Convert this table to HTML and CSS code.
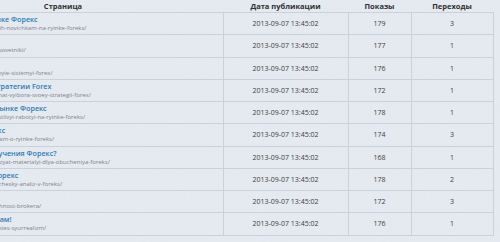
FILE: index.html
```html
<!DOCTYPE html>
<html lang="ru">
<head>
<meta charset="utf-8">
<title>Статистика страниц</title>
<link rel="stylesheet" href="styles.css">
</head>
<body>
<div class="wrap">
<table class="stats">
  <colgroup>
    <col class="c-page"><col class="c-date"><col class="c-views"><col class="c-clicks">
  </colgroup>
  <thead>
    <tr><th>Страница</th><th>Дата публикации</th><th>Показы</th><th>Переходы</th></tr>
  </thead>
  <tbody>
    <tr><td class="page"><a class="title" href="#">Советы новичкам на рынке Форекс</a><span class="url">http://forex-blog.ru/nachinayushih-novichkam-na-ryinke-foreks/</span></td><td>2013-09-07 13:45:02</td><td>179</td><td>3</td></tr>
    <tr><td class="page"><a class="title" href="#">Советники</a><span class="url">http://forex-blog.ru/fx-ekspertyi-sovetniki/</span></td><td>2013-09-07 13:45:02</td><td>177</td><td>1</td></tr>
    <tr><td class="page"><a class="title" href="#">Торговые системы</a><span class="url">http://forex-blog.ru/vyibor-torgovyie-sistemyi-forex/</span></td><td>2013-09-07 13:45:02</td><td>176</td><td>1</td></tr>
    <tr><td class="page"><a class="title" href="#">Секреты выбора своей стратегии Forex</a><span class="url">http://forex-blog.ru/glavnyiy-format-vyibora-svoey-strategii-forex/</span></td><td>2013-09-07 13:45:02</td><td>172</td><td>1</td></tr>
    <tr><td class="page"><a class="title" href="#">Секреты для работы на рынке Форекс</a><span class="url">http://forex-blog.ru/sovetyi-schastlivyi-rabotyi-na-ryinke-foreks/</span></td><td>2013-09-07 13:45:02</td><td>178</td><td>1</td></tr>
    <tr><td class="page"><a class="title" href="#">Новичкам о рынке Форекс</a><span class="url">http://forex-blog.ru/dlya-novichkam-o-ryinke-foreks/</span></td><td>2013-09-07 13:45:02</td><td>174</td><td>3</td></tr>
    <tr><td class="page"><a class="title" href="#">Какие материалы для обучения Форекс?</a><span class="url">http://forex-blog.ru/gde-mogut-vzyat-materialyi-dlya-obucheniya-foreks/</span></td><td>2013-09-07 13:45:02</td><td>168</td><td>1</td></tr>
    <tr><td class="page"><a class="title" href="#">Технический анализ в Форекс</a><span class="url">http://forex-blog.ru/vvod-v-tehnichesky-analiz-v-foreks/</span></td><td>2013-09-07 13:45:02</td><td>178</td><td>2</td></tr>
    <tr><td class="page"><a class="title" href="#">Надежность брокера</a><span class="url">http://forex-blog.ru/analiz-nadezhnost-brokera/</span></td><td>2013-09-07 13:45:02</td><td>172</td><td>3</td></tr>
    <tr><td class="page"><a class="title" href="#">Желаем успехов трейдерам!</a><span class="url">http://forex-blog.ru/kartinyi-puantes-syurrealizm/</span></td><td>2013-09-07 13:45:02</td><td>176</td><td>1</td></tr>
  </tbody>
</table>
</div>
</body>
</html>
```

FILE: styles.css
```css
html, body {
  margin: 0;
  padding: 0;
}
body {
  width: 500px;
  height: 242px;
  overflow: hidden;
  background-color: #e7ebf2;
  background-image: url("data:image/svg+xml;utf8,<svg xmlns='http://www.w3.org/2000/svg' width='120' height='120'><filter id='n'><feTurbulence type='fractalNoise' baseFrequency='0.9' numOctaves='2' stitchTiles='stitch'/><feColorMatrix values='0 0 0 0 0.5  0 0 0 0 0.52  0 0 0 0 0.58  0 0 0 0.09 0'/></filter><rect width='120' height='120' filter='url(%23n)'/></svg>");
  font-family: "Open Sans", "Noto Sans", sans-serif;
  color: #3a3a3a;
}
.wrap {
  margin-left: -97px;
  width: 590px;
}
.stats {
  border-collapse: collapse;
  table-layout: fixed;
  width: 590px;
}
.c-page { width: 320px; }
.c-date { width: 125px; }
.c-views { width: 63px; }
.c-clicks { width: 82px; }
.stats th {
  height: 12px;
  padding: 0;
  font-size: 7.5px;
  font-weight: 700;
  color: #2f2f2f;
  text-align: center;
  line-height: 12px;
  border-bottom: 1px solid #cbd1da;
}
.stats td {
  height: 21.25px;
  padding: 0;
  border: 1px solid #cbd1da;
  font-size: 7px;
  text-align: center;
  vertical-align: middle;
  color: #3c3c3c;
}
.stats td.page {
  text-align: left;
  padding-left: 5px;
  border-left: none;
}
.title {
  display: block;
  font-size: 7.2px;
  font-weight: 600;
  line-height: 10px;
  color: #2b7bb5;
  text-decoration: none;
  white-space: nowrap;
}
.url {
  display: block;
  font-size: 6px;
  line-height: 9px;
  color: #7f8288;
  white-space: nowrap;
}
```
